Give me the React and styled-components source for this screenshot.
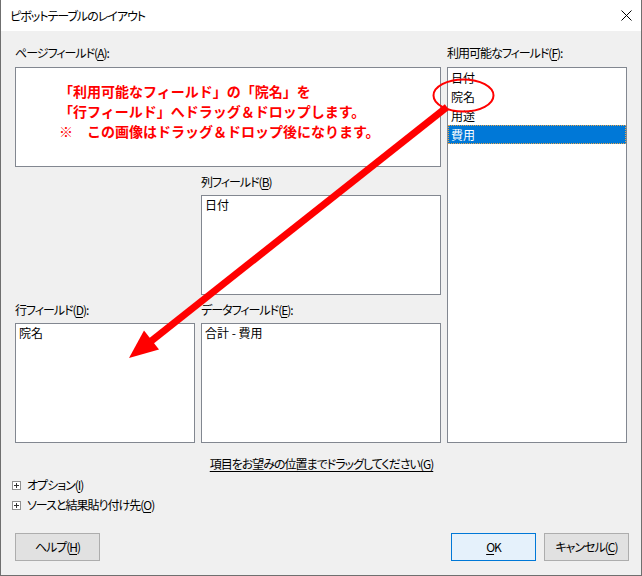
import React from "react";
import styled, { createGlobalStyle } from "styled-components";

const GlobalStyle = createGlobalStyle`
  html, body {
    margin: 0;
    padding: 0;
    background: #f0f0f0;
  }
  body {
    font-family: "Noto Sans CJK JP", "Noto Sans", sans-serif;
  }
`;

const Dialog = styled.div`
  position: relative;
  width: 642px;
  height: 576px;
  box-sizing: border-box;
  background: #f0f0f0;
  border: 1px solid #6f6f6f;
  border-top: none;
  display: flex;
  flex-direction: column;
  font-size: 12px;
  color: #000;
  font-feature-settings: "palt";
  letter-spacing: -1px;
`;

const TitleBar = styled.div`
  height: 31px;
  flex-shrink: 0;
  background: #fff;
  display: flex;
  align-items: center;
  justify-content: space-between;
  padding: 0 9px 0 9px;
`;

const Title = styled.div`
  font-size: 12px;
  line-height: 16px;
`;

const Body = styled.div`
  flex: 1;
  display: flex;
  flex-direction: column;
  padding: 14px 13px 14px 14px;
`;

const FieldGrid = styled.div`
  display: grid;
  grid-template-columns: 180px 240px 180px;
  grid-template-rows: 22px 100px 28px 100px 28px 120px;
  column-gap: 6px;
`;

const Label = styled.div`
  line-height: 16px;
  white-space: nowrap;
  grid-column: ${(p) => p.$col};
  grid-row: ${(p) => p.$row};
  align-self: ${(p) => (p.$end ? "end" : "start")};
  margin-bottom: ${(p) => (p.$end ? "5px" : "0")};
`;

const U = styled.span`
  text-decoration: underline;
  text-underline-offset: 2px;
`;

const FieldBox = styled.div`
  grid-column: ${(p) => p.$col};
  grid-row: ${(p) => p.$row};
  background: #fff;
  border: 1px solid #828790;
  box-sizing: border-box;
  padding: 1px 3px;
  line-height: 16px;
  letter-spacing: 0;
`;

const Note = styled.div`
  padding: 12px 0 0 40px;
  color: #ff0000;
  font-weight: bold;
  font-size: 14px;
  line-height: 20px;
  letter-spacing: 0;
  font-feature-settings: normal;
  white-space: nowrap;
`;

const ListBox = styled.div`
  grid-column: 3;
  grid-row: 2 / 7;
  background: #fff;
  border: 1px solid #828790;
  box-sizing: border-box;
  display: flex;
  flex-direction: column;
  letter-spacing: 0;
`;

const ListItem = styled.div`
  height: 19px;
  box-sizing: border-box;
  background: ${(p) => (p.$selected ? "#0078d7" : "transparent")};
  color: ${(p) => (p.$selected ? "#fff" : "#000")};
  border: 1px dotted ${(p) => (p.$selected ? "#e9a54a" : "transparent")};
  line-height: 17px;
  padding-left: 2px;
`;

const DragHint = styled.div`
  margin-top: 13px;
  line-height: 16px;
  text-align: center;
  text-decoration: underline;
  text-underline-offset: 2px;
`;

const Expanders = styled.div`
  margin-top: 3px;
  margin-left: -3px;
  display: flex;
  flex-direction: column;
`;

const ExpandRow = styled.div`
  height: 20px;
  display: flex;
  align-items: center;
  gap: 6px;
  line-height: 16px;
`;

const Footer = styled.div`
  margin-top: auto;
  display: flex;
  justify-content: space-between;
  align-items: flex-end;
  margin-right: -1px;
`;

const ButtonGroup = styled.div`
  display: flex;
  gap: 8px;
`;

const Button = styled.div`
  width: 85px;
  height: 28px;
  box-sizing: border-box;
  display: flex;
  align-items: center;
  justify-content: center;
  background: ${(p) => (p.$default ? "#e5f1fb" : "#e1e1e1")};
  border: 1px solid ${(p) => (p.$default ? "#0078d7" : "#adadad")};
  line-height: 16px;
`;

const Overlay = styled.svg`
  position: absolute;
  left: -1px;
  top: 0;
  width: 642px;
  height: 576px;
  pointer-events: none;
`;

function CloseIcon() {
  return (
    <svg width="11" height="11" viewBox="0 0 11 11">
      <path d="M0.5 0.5 L10.5 10.5 M10.5 0.5 L0.5 10.5" stroke="#000" strokeWidth="1" />
    </svg>
  );
}

function PlusBox() {
  return (
    <svg width="9" height="9" viewBox="0 0 9 9">
      <rect x="0.5" y="0.5" width="8" height="8" fill="#fff" stroke="#919191" />
      <path d="M2 4.5 H7 M4.5 2 V7" stroke="#333" strokeWidth="1" />
    </svg>
  );
}

const availableFields = ["日付", "院名", "用途", "費用"];

export default function App() {
  return (
    <>
      <GlobalStyle />
      <Dialog>
        <TitleBar>
          <Title>ピボットテーブルのレイアウト</Title>
          <CloseIcon />
        </TitleBar>

        <Body>
          <FieldGrid>
            <Label $col="1 / 3" $row={1}>
              ページフィールド(<U>A</U>):
            </Label>
            <Label $col={3} $row={1}>
              利用可能なフィールド(<U>F</U>):
            </Label>

            <FieldBox $col="1 / 3" $row={2}>
              <Note>
                「利用可能なフィールド」の「院名」を
                <br />
                「行フィールド」へドラッグ＆ドロップします。
                <br />
                ※　この画像はドラッグ＆ドロップ後になります。
              </Note>
            </FieldBox>

            <ListBox>
              {availableFields.map((f) => (
                <ListItem key={f} $selected={f === "費用"}>
                  {f}
                </ListItem>
              ))}
            </ListBox>

            <Label $col={2} $row={3} $end>
              列フィールド(<U>B</U>)
            </Label>
            <FieldBox $col={2} $row={4}>
              日付
            </FieldBox>

            <Label $col={1} $row={5} $end>
              行フィールド(<U>D</U>):
            </Label>
            <Label $col={2} $row={5} $end>
              データフィールド(<U>E</U>):
            </Label>
            <FieldBox $col={1} $row={6}>
              院名
            </FieldBox>
            <FieldBox $col={2} $row={6}>
              合計 - 費用
            </FieldBox>
          </FieldGrid>

          <DragHint>項目をお望みの位置までドラッグしてください(G)</DragHint>

          <Expanders>
            <ExpandRow>
              <PlusBox />
              <span>
                オプション(<U>I</U>)
              </span>
            </ExpandRow>
            <ExpandRow>
              <PlusBox />
              <span>
                ソースと結果貼り付け先(<U>O</U>)
              </span>
            </ExpandRow>
          </Expanders>

          <Footer>
            <Button>
              <span>
                ヘルプ(<U>H</U>)
              </span>
            </Button>
            <ButtonGroup>
              <Button $default>
                <span>
                  <U>O</U>K
                </span>
              </Button>
              <Button>
                <span>
                  キャンセル(<U>C</U>)
                </span>
              </Button>
            </ButtonGroup>
          </Footer>
        </Body>

        <Overlay viewBox="0 0 642 576">
          <ellipse cx="463.5" cy="95.5" rx="30" ry="16" fill="none" stroke="#ff0000" strokeWidth="2" />
          <line x1="447" y1="107" x2="150" y2="342" stroke="#ff0000" strokeWidth="7" />
          <polygon points="129,358 159,349.5 144,330.5" fill="#ff0000" />
        </Overlay>
      </Dialog>
    </>
  );
}
